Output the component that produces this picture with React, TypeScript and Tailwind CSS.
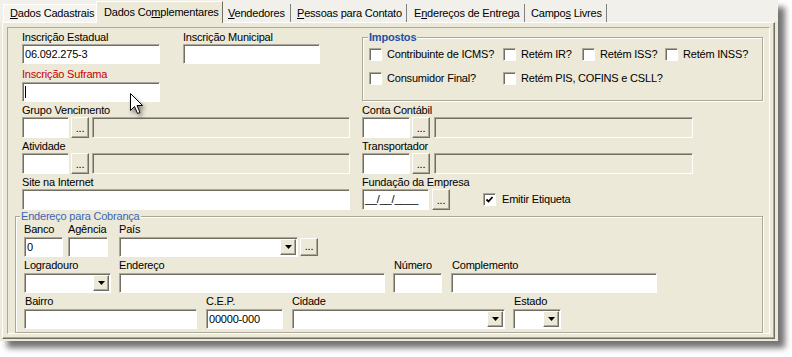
import React from "react"

const afundado =
  "border border-t-[#aca899] border-l-[#aca899] border-r-white border-b-white shadow-[inset_1px_1px_0_#716f64]"
const elevado =
  "border border-t-white border-l-white border-r-[#716f64] border-b-[#716f64] shadow-[inset_-1px_-1px_0_#aca899]"

function Rotulo(props: { children: React.ReactNode; className?: string }) {
  return <div className={`h-[13px] leading-[13px] whitespace-nowrap ${props.className ?? ""}`}>{props.children}</div>
}

function Campo(props: { className: string; cinza?: boolean; children?: React.ReactNode }) {
  return (
    <div
      className={`${afundado} ${props.cinza ? "bg-[#ece9d8]" : "bg-white"} flex items-center pl-[2px] whitespace-nowrap overflow-hidden shrink-0 ${props.className}`}
    >
      {props.children}
    </div>
  )
}

function Reticencias(props: { className: string }) {
  return (
    <div className={`${elevado} bg-[#ece9d8] flex items-end justify-center pb-[3px] leading-none shrink-0 ${props.className}`}>
      ...
    </div>
  )
}

function Combo(props: { className: string }) {
  return (
    <div className={`${afundado} bg-white flex justify-end p-[1px] shrink-0 ${props.className}`}>
      <div className={`${elevado} bg-[#ece9d8] w-[16px] flex items-center justify-center`}>
        <svg width="7" height="4" viewBox="0 0 7 4">
          <path d="M0 0h7L3.5 4z" fill="#000" />
        </svg>
      </div>
    </div>
  )
}

function Caixa(props: { marcada?: boolean }) {
  return (
    <div className={`${afundado} bg-white w-[13px] h-[13px] shrink-0 flex items-center justify-center`}>
      {props.marcada && (
        <svg width="9" height="9" viewBox="0 0 9 9">
          <polyline points="1.5,4.5 3.5,6.5 7.5,2" fill="none" stroke="#000" strokeWidth="1.8" />
        </svg>
      )}
    </div>
  )
}

function Opcao(props: { texto: string; className?: string; marcada?: boolean }) {
  return (
    <div className={`flex items-center gap-[5px] whitespace-nowrap ${props.className ?? ""}`}>
      <Caixa marcada={props.marcada} />
      <span>{props.texto}</span>
    </div>
  )
}

function Aba(props: { children: React.ReactNode; className: string }) {
  return (
    <div className={`h-[18px] flex items-center whitespace-nowrap border-r border-r-[#808080] ${props.className}`}>
      <span>{props.children}</span>
    </div>
  )
}

export default function App() {
  return (
    <div className="relative w-[792px] h-[357px] bg-white font-['Liberation_Sans',Arial,sans-serif] text-[11px] tracking-[-0.2px] text-black">
      <div className="w-[778px] h-[341px] bg-[#ece9d8] shadow-[7px_7px_6px_rgba(0,0,0,0.55)] flex flex-col">
        {/* abas */}
        <div className="h-[22px] shrink-0 flex items-end pl-[3px] bg-[#f1f0ea]">
          <div className="w-[93px] h-[18px] bg-[#f5f4ef] border-t border-l border-white pl-[6px] flex items-center whitespace-nowrap">
            <span>
              <u>D</u>ados Cadastrais
            </span>
          </div>
          <div className="relative z-10 -mb-px w-[127px] h-[22px] bg-[#ece9d8] border-t border-l border-white border-r border-r-[#716f64] pl-[7px] pt-[2px] whitespace-nowrap">
            Dados Co<u>m</u>plementares
          </div>
          <Aba className="w-[68px] pl-[5px]">
            <u>V</u>endedores
          </Aba>
          <Aba className="w-[116px] pl-[6px]">
            <u>P</u>essoas para Contato
          </Aba>
          <Aba className="w-[118px] pl-[7px]">
            E<u>n</u>dereços de Entrega
          </Aba>
          <Aba className="w-[82px] pl-[6px]">
            Campo<u>s</u> Livres
          </Aba>
        </div>

        {/* folha da aba */}
        <div className="flex-1 ml-[2px] mr-[3px] mb-[2px] border border-t-white border-l-white border-r-[#716f64] border-b-[#716f64] shadow-[inset_-1px_-1px_0_#aca899] p-[4px] flex">
          <div className="flex-1 border border-t-[#aca899] border-l-[#aca899] border-r-white border-b-white pl-[7px] pr-[6px] pt-[3px] flex flex-col">
            {/* inscrições e impostos */}
            <div className="flex h-[73px] shrink-0">
              <div className="w-[335px] pl-[7px] flex flex-col">
                <div className="flex gap-[23px]">
                  <div>
                    <Rotulo>Inscrição Estadual</Rotulo>
                    <Campo className="w-[138px] h-[20px]">06.092.275-3</Campo>
                  </div>
                  <div>
                    <Rotulo>Inscrição Municipal</Rotulo>
                    <Campo className="w-[137px] h-[20px]" />
                  </div>
                </div>
                <div className="mt-[4px]">
                  <Rotulo className="h-[14px] text-[#c80000]">Inscrição Suframa</Rotulo>
                  <Campo className="w-[138px] h-[20px]">
                    <span className="w-px h-[12px] bg-black" />
                  </Campo>
                </div>
              </div>

              <div className="ml-[12px] w-[401px] pt-[6px]">
                <div className="h-[64px] border border-[#aca899] shadow-[inset_1px_1px_0_white,1px_1px_0_white] pl-[6px]">
                  <div className="-mt-[7px] -ml-[1px] w-fit px-[1px] bg-[#ece9d8] font-bold text-[#1f4fa8] leading-[13px]">
                    Impostos
                  </div>
                  <div className="flex h-[20px] items-center">
                    <Opcao className="w-[134px]" texto="Contribuinte de ICMS?" />
                    <Opcao className="w-[79px]" texto="Retém IR?" />
                    <Opcao className="w-[83px]" texto="Retém ISS?" />
                    <Opcao texto="Retém INSS?" />
                  </div>
                  <div className="flex h-[20px] items-center mt-[4px]">
                    <Opcao className="w-[134px]" texto="Consumidor Final?" />
                    <Opcao texto="Retém PIS, COFINS e CSLL?" />
                  </div>
                </div>
              </div>
            </div>

            {/* grupo vencimento / conta contábil */}
            <div className="flex h-[36px] shrink-0">
              <div className="w-[335px] pl-[7px]">
                <Rotulo>Grupo Vencimento</Rotulo>
                <div className="flex">
                  <Campo className="w-[47px] h-[21px]" />
                  <Reticencias className="ml-[2px] w-[18px] h-[21px]" />
                  <Campo cinza className="ml-[3px] w-[258px] h-[21px]" />
                </div>
              </div>
              <div className="ml-[12px]">
                <Rotulo>Conta Contábil</Rotulo>
                <div className="flex">
                  <Campo className="w-[48px] h-[21px]" />
                  <Reticencias className="ml-[2px] w-[18px] h-[21px]" />
                  <Campo cinza className="ml-[4px] w-[259px] h-[21px]" />
                </div>
              </div>
            </div>

            {/* atividade / transportador */}
            <div className="flex h-[36px] shrink-0">
              <div className="w-[335px] pl-[7px]">
                <Rotulo>Atividade</Rotulo>
                <div className="flex">
                  <Campo className="w-[47px] h-[21px]" />
                  <Reticencias className="ml-[2px] w-[18px] h-[21px]" />
                  <Campo cinza className="ml-[3px] w-[258px] h-[21px]" />
                </div>
              </div>
              <div className="ml-[12px]">
                <Rotulo>Transportador</Rotulo>
                <div className="flex">
                  <Campo className="w-[48px] h-[21px]" />
                  <Reticencias className="ml-[2px] w-[18px] h-[21px]" />
                  <Campo cinza className="ml-[4px] w-[259px] h-[21px]" />
                </div>
              </div>
            </div>

            {/* site / fundação */}
            <div className="flex h-[36px] shrink-0">
              <div className="w-[335px] pl-[7px]">
                <Rotulo>Site na Internet</Rotulo>
                <Campo className="w-[328px] h-[21px]" />
              </div>
              <div className="ml-[12px]">
                <Rotulo>Fundação da Empresa</Rotulo>
                <div className="flex items-center">
                  <Campo className="w-[67px] h-[21px]">__/__/____</Campo>
                  <Reticencias className="ml-[3px] w-[18px] h-[21px]" />
                  <Opcao className="ml-[33px] gap-[6px]" marcada texto="Emitir Etiqueta" />
                </div>
              </div>
            </div>

            {/* endereço para cobrança */}
            <div className="mt-[4px] flex-1 border border-[#aca899] shadow-[inset_1px_1px_0_white,1px_1px_0_white] pl-[8px]">
              <div className="-mt-[7px] -ml-[4px] w-fit px-[1px] bg-[#ece9d8] text-[#3a66b5] leading-[13px]">
                Endereço para Cobrança
              </div>

              <div className="flex">
                <div>
                  <Rotulo className="h-[14px]">Banco</Rotulo>
                  <Campo className="w-[39px] h-[20px]">0</Campo>
                </div>
                <div className="ml-[5px]">
                  <Rotulo className="h-[14px]">Agência</Rotulo>
                  <Campo className="w-[40px] h-[20px]" />
                </div>
                <div className="ml-[11px]">
                  <Rotulo className="h-[14px]">País</Rotulo>
                  <div className="flex items-center">
                    <Combo className="w-[179px] h-[20px]" />
                    <Reticencias className="ml-[2px] w-[18px] h-[18px]" />
                  </div>
                </div>
              </div>

              <div className="flex mt-[2px]">
                <div>
                  <Rotulo className="h-[14px]">Logradouro</Rotulo>
                  <Combo className="w-[87px] h-[20px]" />
                </div>
                <div className="ml-[8px]">
                  <Rotulo className="h-[14px]">Endereço</Rotulo>
                  <Campo className="w-[266px] h-[20px]" />
                </div>
                <div className="ml-[8px]">
                  <Rotulo className="h-[14px] pl-px">Número</Rotulo>
                  <Campo className="w-[49px] h-[20px]" />
                </div>
                <div className="ml-[9px]">
                  <Rotulo className="h-[14px] pl-px">Complemento</Rotulo>
                  <Campo className="w-[206px] h-[20px]" />
                </div>
              </div>

              <div className="flex mt-[2px]">
                <div>
                  <Rotulo className="h-[14px] pl-px">Bairro</Rotulo>
                  <Campo className="w-[173px] h-[20px]" />
                </div>
                <div className="ml-[9px]">
                  <Rotulo className="h-[14px]">C.E.P.</Rotulo>
                  <Campo className="w-[77px] h-[20px]">00000-000</Campo>
                </div>
                <div className="ml-[9px]">
                  <Rotulo className="h-[14px]">Cidade</Rotulo>
                  <Combo className="w-[213px] h-[20px]" />
                </div>
                <div className="ml-[8px]">
                  <Rotulo className="h-[14px] pl-px">Estado</Rotulo>
                  <Combo className="w-[48px] h-[20px]" />
                </div>
              </div>
            </div>
          </div>
        </div>
      </div>

      {/* ponteiro do mouse */}
      <svg
        className="absolute left-[130px] top-[93px] drop-shadow-[2px_3px_2px_rgba(0,0,0,0.45)]"
        width="13"
        height="22"
        viewBox="0 0 13 22"
      >
        <path d="M0.5 0.5V17.5L4.5 13.5L7.5 20.5L10 19.5L7 12.5H12.5Z" fill="#fff" stroke="#000" strokeWidth="1" strokeLinejoin="miter" />
      </svg>
    </div>
  )
}
